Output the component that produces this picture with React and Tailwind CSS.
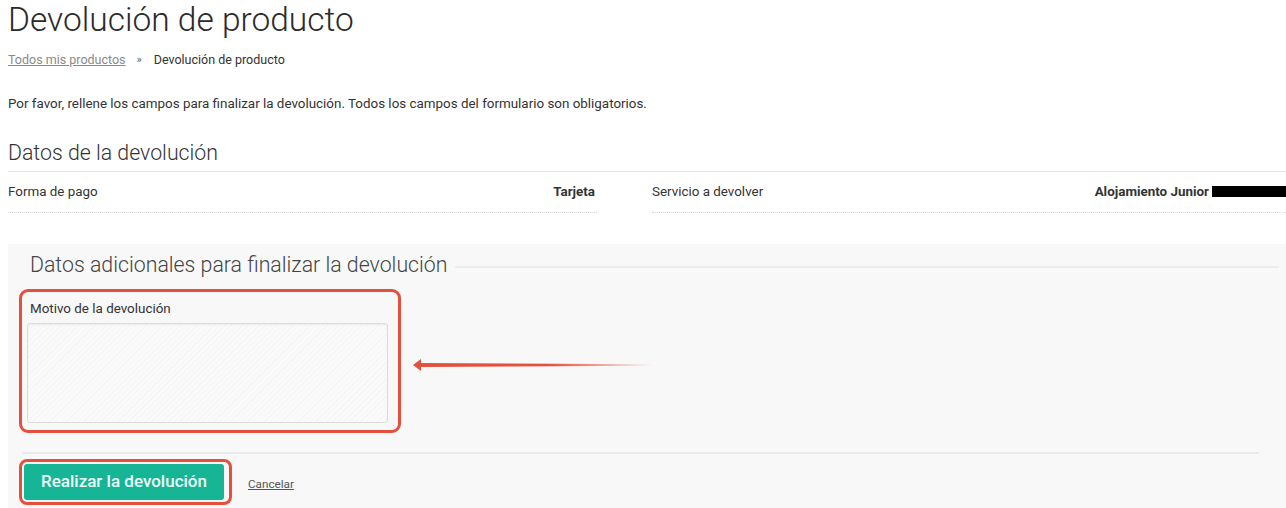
import React from "react";

export default function App() {
  return (
    <div className="w-[1286px] h-[508px] overflow-hidden bg-white text-[#333] font-['Roboto',sans-serif]">
      <div className="pl-2 w-[1286px]">
        <h1 className="text-[33.5px] leading-[40px] font-light text-[#2b2b2b]">Devolución de producto</h1>
        <div className="mt-3 text-[12.5px] leading-4 flex items-center">
          <a className="text-[#8a8a8a] underline">Todos mis productos</a>
          <span className="ml-[11px] mr-[12px] text-[#666] text-[11px]">»</span>
          <span className="text-[#333]">Devolución de producto</span>
        </div>
        <p className="mt-[27px] text-[13.4px] leading-[18px] text-[#333]">
          Por favor, rellene los campos para finalizar la devolución. Todos los campos del formulario son obligatorios.
        </p>
        <h2 className="mt-[26px] h-[33px] text-[21.3px] leading-[28px] font-light text-[#333] border-b border-[#e2e2e2]">
          Datos de la devolución
        </h2>
        <div className="grid grid-cols-[589px_1fr] gap-x-[55px] text-[13.4px]">
          <div className="h-[41px] flex items-center justify-between border-b border-dotted border-[#d8d8d8] pr-[2px]">
            <span>Forma de pago</span>
            <span className="font-bold">Tarjeta</span>
          </div>
          <div className="h-[41px] flex items-center justify-between border-b border-dotted border-[#d8d8d8] overflow-hidden">
            <span>Servicio a devolver</span>
            <span className="flex items-center font-bold">
              Alojamiento Junior
              <span className="ml-[3px] inline-block w-[74px] h-[11px] bg-black"></span>
            </span>
          </div>
        </div>

        <div className="relative mt-[31px] bg-[#f8f8f8] h-[300px] pt-[7px]">
          <div className="flex items-center pl-[22px] pr-[7px]">
            <h3 className="text-[21.3px] leading-[28px] font-light text-[#444] whitespace-nowrap">
              Datos adicionales para finalizar la devolución
            </h3>
            <div className="ml-[7px] mt-[4px] flex-1 h-[2px] bg-[#ececec]"></div>
          </div>

          <div className="mt-[10px] ml-[11px] w-[382px] h-[144px] border-[3px] border-[#e4503e] rounded-[9px] pl-[5px] pt-[9px]">
            <label className="block ml-[3px] text-[13.4px] leading-4 text-[#333]">Motivo de la devolución</label>
            <div className="mt-[6px] w-[361px] h-[100px] rounded-[3px] border border-[#dcdcdc] shadow-[inset_0_1px_2px_rgba(0,0,0,0.06)] bg-[repeating-linear-gradient(135deg,#f5f5f5_0px,#f5f5f5_1px,#fafafa_1px,#fafafa_4px)]"></div>
          </div>

          <svg className="absolute left-[405px] top-[114px]" width="240" height="14" viewBox="0 0 240 14">
            <defs>
              <linearGradient id="arrowGrad" x1="0" y1="0" x2="1" y2="0">
                <stop offset="0" stopColor="#e4503e" stopOpacity="1" />
                <stop offset="0.55" stopColor="#e4503e" stopOpacity="1" />
                <stop offset="1" stopColor="#e4503e" stopOpacity="0" />
              </linearGradient>
            </defs>
            <polygon points="0,7 8,1 8,13" fill="#e4503e" />
            <polygon points="7,5 240,6.3 240,7.7 7,9" fill="url(#arrowGrad)" />
          </svg>

          <div className="mt-[19px] ml-[14px] w-[1237px] h-[2px] bg-[#ebebeb]"></div>

          <div className="mt-[5px] ml-[11px] flex items-center">
            <div className="border-[3px] border-[#e4503e] rounded-[8px] pt-[2px] pb-[2px] pl-[2px] pr-[5px]">
              <button className="w-[200px] h-[36px] rounded-[3px] bg-[#16b596] text-[#effff9] text-[17px] font-medium">
                Realizar la devolución
              </button>
            </div>
            <a className="ml-[16px] mt-[6px] text-[11.7px] text-[#555] underline">Cancelar</a>
          </div>
        </div>
      </div>
    </div>
  );
}
